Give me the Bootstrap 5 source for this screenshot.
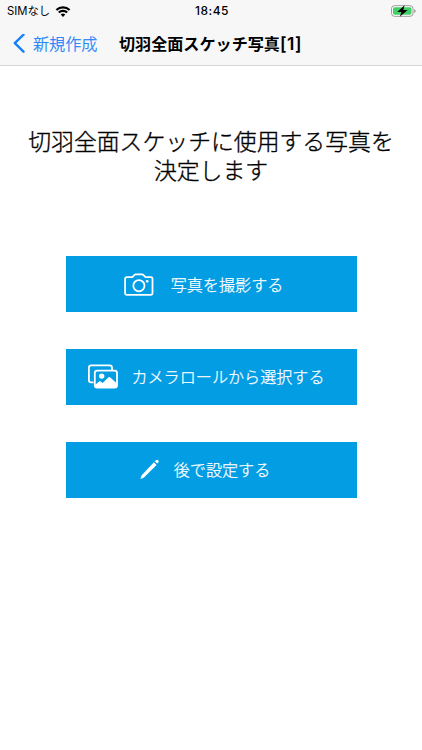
<!DOCTYPE html>
<html lang="ja">
<head>
<meta charset="utf-8">
<meta name="viewport" content="width=device-width, initial-scale=1">
<title>切羽全面スケッチ写真[1]</title>
<link href="https://cdn.jsdelivr.net/npm/bootstrap@5.3.0/dist/css/bootstrap.min.css" rel="stylesheet">
<style>
body { font-family: Inter, "Noto Sans CJK JP", sans-serif; color: #000; height: 750px; overflow: hidden; }
svg { display: block; flex: none; }
.top-area { background: #f7f7f7; border-bottom: 1px solid #d6d6d6; height: 66px; }
.status-bar { height: 22px; padding: 0 5px 0 7px; font-size: 11.3px; line-height: 22px; }
.status-bar .clock { font-size: 12px; font-weight: 500; letter-spacing: .5px; }
.status-side { width: 120px; }
.title-bar { height: 43px; padding: 1px 13px 0; font-size: 16.1px; line-height: 43px; }
.back-link { color: #1680f8; width: 106px; gap: 8px; font-weight: 300; -webkit-text-stroke: .25px; }
.page-title { font-size: 16.1px; line-height: 43px; font-weight: 600; }
.page-title .index { font-size: 17.4px; letter-spacing: .5px; }
.lead-text { font-size: 22.85px; line-height: 29px; font-weight: 300; -webkit-text-stroke: .35px; margin-top: 62px; }
.choices { width: 291px; gap: 36.7px; margin-top: 70.3px; }
.choice { height: 56px; background: #039de4; border: 0; border-radius: 0; color: #fff; font-size: 16.1px; line-height: 24px; font-weight: 300; -webkit-text-stroke: .25px; padding: 1px 0 0; }
.choice:hover { background: #0390d2; color: #fff; }
.choice-camera { padding-right: 16px; gap: 16px; }
.choice-roll { padding-right: 11px; gap: 9px; }
.choice-later { padding-right: 13px; gap: 9px; }
</style>
</head>
<body class="bg-white">
<header class="top-area">
  <div class="status-bar d-flex justify-content-between">
    <div class="status-side d-flex align-items-center gap-1">
      <span>SIMなし</span>
      <svg width="18" height="11" viewBox="0 0 18 11" fill="none" stroke="#000" stroke-width="2.1"><path d="M2.4 4.1a9.4 9.4 0 0 1 13.2 0M4.8 6.6a5.9 5.9 0 0 1 8.4 0"/><path d="M9 10.9 6.7 8.6a3.3 3.3 0 0 1 4.6 0Z" fill="#000" stroke="none"/></svg>
    </div>
    <span class="clock">18:45</span>
    <div class="status-side d-flex align-items-center justify-content-end">
      <svg width="26" height="12" viewBox="0 0 26 12"><rect x=".5" y=".7" width="21.5" height="10.6" rx="3" fill="#fff" stroke="#999"/><rect x="2" y="2.2" width="18.5" height="7.6" rx="1.7" fill="#41cf67"/><path d="M23.2 4v4q1.5-.6 1.5-2T23.2 4Z" fill="#999"/><path d="M13.6.3 6.2 6.9h4.3L8.8 11.7l7.8-6.6h-4.3Z" fill="#000"/></svg>
    </div>
  </div>
  <nav class="title-bar d-flex align-items-center">
    <a href="#" class="back-link d-flex align-items-center text-decoration-none">
      <svg width="12" height="20" viewBox="0 0 12 20" fill="none" stroke="#1680f8" stroke-width="2.4" stroke-linecap="round" stroke-linejoin="round"><path d="M10.5 .7 1.8 9.2l8.7 8.5"/></svg>
      <span>新規作成</span>
    </a>
    <h1 class="page-title m-0 text-nowrap">切羽全面スケッチ写真<span class="index">[1]</span></h1>
  </nav>
</header>
<main class="d-flex flex-column align-items-center">
  <h2 class="lead-text mb-0 text-center text-nowrap">切羽全面スケッチに使用する写真を<br>決定します</h2>
  <div class="choices d-flex flex-column">
    <button type="button" class="choice choice-camera btn d-flex align-items-center justify-content-center">
      <svg width="32" height="26" viewBox="0 0 32 26" fill="none" stroke="#fff" stroke-width="1.8" stroke-linejoin="round"><path d="M4 5.1h5.3l2.2-2.2q.5-.6 1.3-.6h6.2q.8 0 1.3.6l2.2 2.2h5.3q1.7 0 1.7 1.9v14q0 1.9-1.7 1.9H4q-1.9 0-1.9-1.9V7Q2.1 5.1 4 5.1Z"/><circle cx="15.9" cy="13.7" r="5.6"/><circle cx="24.2" cy="9.3" r="1.4" fill="#fff" stroke="none"/></svg>
      <span>写真を撮影する</span>
    </button>
    <button type="button" class="choice choice-roll btn d-flex align-items-center justify-content-center">
      <svg width="36" height="28" viewBox="0 0 36 28" fill="none" stroke="#fff" stroke-width="1.8" stroke-linejoin="round"><path d="M7.5 19.3H5.3q-2.4 0-2.4-2.4V4.8q0-2.4 2.4-2.4h18.3q2.4 0 2.4 2.4v2.1"/><rect x="8.8" y="7.6" width="22.2" height="17" rx="2.4"/><circle cx="15.7" cy="13.1" r="2.7" fill="#fff" stroke="none"/><path d="m9 22.1 4.1-3.5q.8-.7 1.6 0l1.9 1.5 5.7-5.5q1-1 2 0l6.7 5.8v2.1q0 2-2 2H11q-2 0-2-2Z" fill="#fff" stroke="none"/></svg>
      <span>カメラロールから選択する</span>
    </button>
    <button type="button" class="choice choice-later btn d-flex align-items-center justify-content-center">
      <svg width="26" height="24" viewBox="0 0 26 24" fill="#fff"><path d="m14.9 4.2 2.7 2.7L5.2 19.3q-.4.4-1 .6l-2.8 1 1-2.8q.2-.6.6-1Z"/><path d="m15.8 3.4 1.1-1.1q1.2-1 2.3 0 1.1 1.2 0 2.4l-.9.9Z"/></svg>
      <span>後で設定する</span>
    </button>
  </div>
</main>
<script src="https://cdn.jsdelivr.net/npm/bootstrap@5.3.0/dist/js/bootstrap.bundle.min.js"></script>
</body>
</html>
